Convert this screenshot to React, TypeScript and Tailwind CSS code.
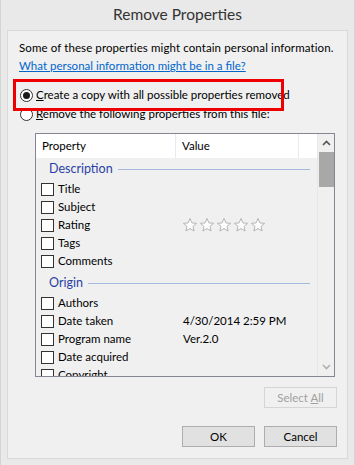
import React from "react";

const font = { fontFamily: 'Lato, "Segoe UI", Arial, sans-serif' };

function Check() {
  return <span className="w-[13px] h-[13px] border border-[#333] bg-white shrink-0" />;
}

function Star() {
  return (
    <svg width="16" height="16" viewBox="0 0 16 16">
      <path
        d="M8 1.5 L9.9 5.9 L14.6 6.3 L11 9.4 L12.1 14 L8 11.6 L3.9 14 L5 9.4 L1.4 6.3 L6.1 5.9 Z"
        fill="#fdfdfd"
        stroke="#b5b5b5"
        strokeWidth="1"
        strokeLinejoin="round"
      />
    </svg>
  );
}

function Row({ label, value, stars }: { label: string; value?: string; stars?: boolean }) {
  return (
    <div className="h-[18px] shrink-0 flex items-center whitespace-nowrap">
      <div className="w-[140px] flex items-center gap-[4px] pl-[5px]">
        <Check />
        <span>{label}</span>
      </div>
      <div className="pl-[7px] flex items-center">
        {stars ? (
          <div className="flex gap-[1px] -ml-[1px]">
            <Star />
            <Star />
            <Star />
            <Star />
            <Star />
          </div>
        ) : (
          <span>{value}</span>
        )}
      </div>
    </div>
  );
}

function Group({ name, first }: { name: string; first?: boolean }) {
  return (
    <div className={`h-[22px] shrink-0 flex items-center pl-[13px] ${first ? "" : "mt-[2px]"}`}>
      <span className="text-[#2a3fa5] text-[12.5px]">{name}</span>
      <span className="flex-1 h-px bg-[#a3b9dd] ml-[5px] mr-[7px]" />
    </div>
  );
}

export default function App() {
  return (
    <div
      className="w-[355px] h-[465px] bg-[#e9e9e9] border-x border-[#d4d4d4] text-[11.5px] text-black overflow-hidden whitespace-nowrap"
      style={font}
    >
      <div className="h-[30px] flex items-center justify-center text-[15.5px] text-[#333]">
        Remove Properties
      </div>
      <div className="relative mx-[6px] h-[429px] bg-[#f0f0f0] border border-[#d9d9d9] pl-[11px] pr-[10px] flex flex-col">
        <div className="h-[16px] mt-[9px] leading-[16px] tracking-[0.1px]">
          Some of these properties might contain personal information.
        </div>
        <div className="h-[16px] mt-[2px] leading-[16px] text-[#0066cc] underline">
          What personal information might be in a file?
        </div>
        <div className="h-[16px] mt-[13px] flex items-center gap-[3px]">
          <span className="ml-[1px] w-[13px] h-[13px] rounded-full border border-[#333] bg-white flex items-center justify-center">
            <span className="w-[7px] h-[7px] rounded-full bg-[#1a1a1a]" />
          </span>
          <span>
            <span className="underline">C</span>reate a copy with all possible properties removed
          </span>
        </div>
        <div className="h-[16px] mt-[3px] flex items-center gap-[3px]">
          <span className="ml-[1px] w-[13px] h-[13px] rounded-full border border-[#333] bg-white" />
          <span>
            <span className="underline">R</span>emove the following properties from this file:
          </span>
        </div>

        {/* list box */}
        <div className="mt-[11px] ml-[16px] w-[300px] h-[244px] shrink-0 border border-[#828790] flex overflow-hidden">
          <div className="flex-1 flex flex-col overflow-hidden">
            <div className="h-[24px] bg-white flex items-center shrink-0">
              <div className="w-[140px] pl-[6px] h-full flex items-center border-r border-[#e6ebf3]">Property</div>
              <div className="w-[123px] pl-[6px] h-full flex items-center border-r border-[#e6ebf3]">Value</div>
            </div>
            <Group name="Description" first />
            <Row label="Title" />
            <Row label="Subject" />
            <Row label="Rating" stars />
            <Row label="Tags" />
            <Row label="Comments" />
            <Group name="Origin" />
            <Row label="Authors" />
            <Row label="Date taken" value="4/30/2014 2:59 PM" />
            <Row label="Program name" value="Ver.2.0" />
            <Row label="Date acquired" />
            <Row label="Copyright" />
          </div>
          <div className="w-[17px] flex flex-col items-center bg-[#f0f0f0] border-l border-[#e8e8e8]">
            <div className="h-[18px] flex items-center justify-center">
              <svg width="9" height="6" viewBox="0 0 9 6">
                <path d="M1 5 L4.5 1.5 L8 5" fill="none" stroke="#555" strokeWidth="1.6" />
              </svg>
            </div>
            <div className="w-[15px] h-[35px] bg-[#a8a8a8]" />
            <div className="flex-1" />
            <div className="h-[18px] flex items-center justify-center">
              <svg width="9" height="6" viewBox="0 0 9 6">
                <path d="M1 1 L4.5 4.5 L8 1" fill="none" stroke="#b0b0b0" strokeWidth="1.6" />
              </svg>
            </div>
          </div>
        </div>

        <div className="mt-[10px] flex justify-end">
          <div className="w-[73px] h-[21px] border border-[#d5d5d5] bg-[#f0f0f0] text-[#a0a0a0] flex items-center justify-center">
            <span>
              Select <span className="underline">A</span>ll
            </span>
          </div>
        </div>
        <div className="mt-[18px] flex justify-end gap-[9px]">
          <div className="w-[73px] h-[21px] border border-[#adadad] bg-[#e1e1e1] flex items-center justify-center">OK</div>
          <div className="w-[73px] h-[21px] border border-[#adadad] bg-[#e1e1e1] flex items-center justify-center">Cancel</div>
        </div>

        {/* red highlight annotation */}
        <div className="absolute left-[5px] top-[48px] w-[271px] h-[32px] border-[3px] border-[#ee0000]" />
      </div>
    </div>
  );
}
